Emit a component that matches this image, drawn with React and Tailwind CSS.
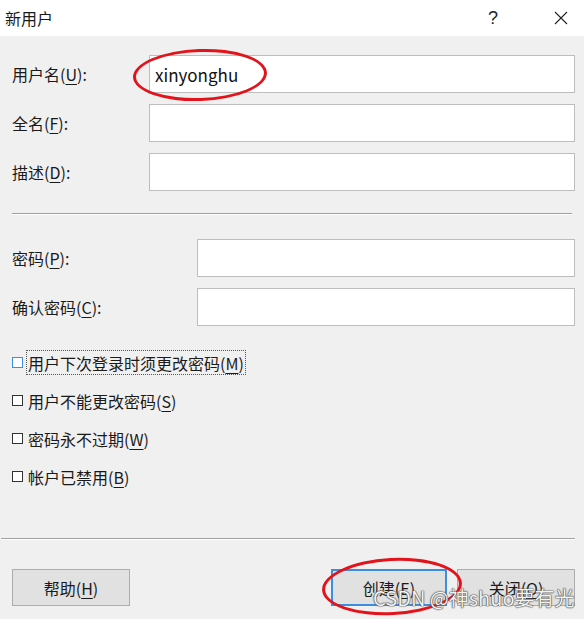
import React from 'react';

function Key({ text, k, colon = true }) {
  return (
    <span className="whitespace-nowrap">
      {text}(<span className="underline underline-offset-[3px] decoration-1">{k}</span>){colon ? ':' : ''}
    </span>
  );
}

function FieldRow({ text, k, labelW, value }) {
  return (
    <div className="flex items-center h-[38px]">
      <div className={labelW}>
        <Key text={text} k={k} />
      </div>
      <div className="flex-1 h-full bg-white border border-[#bdbdbd] flex items-center pl-[5px] text-[17px] text-[#111]">
        {value}
      </div>
    </div>
  );
}

function Check({ text, k, focused }) {
  return (
    <div className="flex items-center h-[25px]">
      <div
        className={
          focused
            ? 'w-[11px] h-[11px] bg-white border border-[#3a8ee6]'
            : 'w-[11px] h-[11px] bg-white border border-[#333]'
        }
      />
      <div
        className={
          focused
            ? 'ml-[3px] h-[25px] flex items-center px-[1px] border border-dotted border-[#555]'
            : 'ml-[3px] h-[25px] flex items-center px-[1px] border border-transparent'
        }
      >
        <Key text={text} k={k} colon={false} />
      </div>
    </div>
  );
}

function Button({ children, primary }) {
  return (
    <div
      className={
        primary
          ? 'h-[37px] w-[116px] flex items-center justify-center bg-[#e1e1e1] border-2 border-[#3c8fe0]'
          : 'h-[37px] w-[118px] flex items-center justify-center bg-[#e1e1e1] border border-[#adadad]'
      }
    >
      {children}
    </div>
  );
}

export default function App() {
  return (
    <div className="relative w-[584px] h-[619px] flex flex-col overflow-hidden bg-[#f0f0f0] text-[16px] leading-none text-[#1a1a1a] font-['Noto_Sans_CJK_SC',sans-serif]">
      {/* title bar */}
      <div className="h-[36px] bg-white flex items-center shrink-0">
        <span className="ml-[5px] text-[16px]">新用户</span>
        <span className="ml-auto text-[18px] text-[#222] font-['Liberation_Sans',sans-serif]">?</span>
        <svg className="ml-[56px] mr-[16px]" width="14" height="14" viewBox="0 0 14 14">
          <path d="M1 1 L13 13 M13 1 L1 13" stroke="#222" strokeWidth="1.1" fill="none" />
        </svg>
      </div>

      {/* body */}
      <div className="flex-1 flex flex-col pl-[12px] pr-[9px] pt-[19px]">
        <div className="flex flex-col gap-[11px]">
          <FieldRow text="用户名" k="U" labelW="w-[137px]" value="xinyonghu" />
          <FieldRow text="全名" k="F" labelW="w-[137px]" />
          <FieldRow text="描述" k="D" labelW="w-[137px]" />
        </div>

        <div className="mt-[22px] mr-[3px] h-[2px] border-t border-[#a0a0a0] border-b border-b-white" />

        <div className="mt-[24px] flex flex-col gap-[11px]">
          <FieldRow text="密码" k="P" labelW="w-[185px]" />
          <FieldRow text="确认密码" k="C" labelW="w-[185px]" />
        </div>

        <div className="mt-[24px] flex flex-col gap-[13px]">
          <Check text="用户下次登录时须更改密码" k="M" focused />
          <Check text="用户不能更改密码" k="S" />
          <Check text="密码永不过期" k="W" />
          <Check text="帐户已禁用" k="B" />
        </div>

        <div className="mt-[49px] -ml-[11px] h-[2px] border-t border-[#a0a0a0] border-b border-b-white" />

        <div className="mt-[29px] flex items-center">
          <Button>
            <Key text="帮助" k="H" colon={false} />
          </Button>
          <div className="ml-auto flex gap-[10px]">
            <Button primary>
              <Key text="创建" k="E" colon={false} />
            </Button>
            <Button>
              <Key text="关闭" k="O" colon={false} />
            </Button>
          </div>
        </div>
      </div>

      {/* annotations */}
      <div className="absolute left-[133px] top-[49px] w-[134px] h-[52px] rounded-[50%] border-[3px] border-[#e3131b] -rotate-2" />
      <div className="absolute left-[322px] top-[558px] w-[140px] h-[57px] rounded-[50%] border-[3px] border-[#e3131b] -rotate-3" />
      <div className="absolute left-[373px] top-[588px] text-[20px] leading-none whitespace-nowrap text-[#f2f2f2] [text-shadow:0_0_1px_#333,0_0_1px_#333,0_0_2px_#777]">
        CSDN @神shuo要有光
      </div>
    </div>
  );
}
